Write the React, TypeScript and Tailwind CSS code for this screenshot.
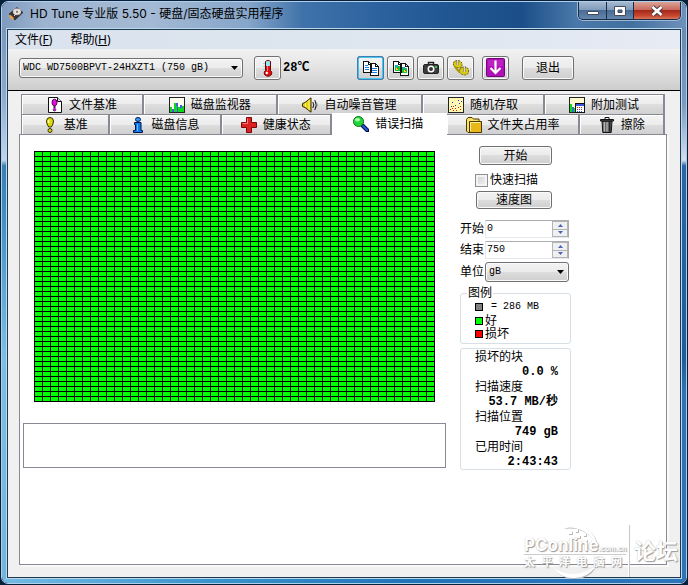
import React, { useState } from 'react';

const CJK = "font-['Liberation_Sans','Noto_Sans_CJK_SC',sans-serif]";
const MONO = "font-['Liberation_Mono','Noto_Sans_CJK_SC',monospace]";
const BUTTON =
  'rounded-[3px] border border-[#707070] bg-[linear-gradient(#f3f3f3,#ebebeb_50%,#dddddd_50%,#cfcfcf)] shadow-[inset_0_0_0_1px_#fafafa]';

type IconProps = { className?: string };

const AppIcon: React.FC = () => (
  <svg className="h-4 w-4" viewBox="0 0 16 16">
    <path d="M1 8 9 1.500l6 5L7 14z" fill="#3a3434" stroke="#1c1a1a" strokeWidth=".6" />
    <ellipse cx="9" cy="5.800" rx="4" ry="3.200" fill="#e8e2dc" stroke="#a99" strokeWidth=".4" />
    <circle cx="9" cy="5.800" r="1.100" fill="#7a6a60" />
    <path d="m2 8.500 4 3.500-1.500 2L1 10.500z" fill="#f0a040" />
    <path d="m6 10 3-3" stroke="#ddd" />
  </svg>
);

const ThermometerIcon: React.FC = () => (
  <svg className="h-[18px] w-4 shrink-0" viewBox="0 0 16 18">
    <path d="M5.500 2.500Q8 0 10.500 2.500V11.500q2 1.500 1 4-3.500 3.500-7 0-1-2.500 1-4z" fill="#e01010" stroke="#700000" />
    <path d="M6 2.500q2-1.500 4 0V7H6z" fill="#8fe8ee" />
    <path d="M7.500 7v5" stroke="#ff8080" />
    <circle cx="6.800" cy="14" r="1.200" fill="#fff" />
    <path d="M3 4.500h2M3 7.500h2M3 10.500h2" stroke="#8adfe4" />
  </svg>
);

const CopyTextIcon: React.FC = () => (
  <svg className="h-4 w-4" viewBox="0 0 16 16" shapeRendering="crispEdges">
    <path d="M.5 1.500h5l3 3v8h-8zM7.500 3.500h5l3 3v9h-8z" fill="#fff" stroke="#111" />
    <path d="M5.500 1.500v3h2M12.500 3.500v3h3" fill="none" stroke="#111" />
    <path d="M2 5.500h3M2 7.500h4M2 9.500h4M9 8.500h5M9 10.500h5M9 12.500h5" stroke="#1d7be8" />
  </svg>
);

const CopyImageIcon: React.FC = () => (
  <svg className="h-4 w-4" viewBox="0 0 16 16" shapeRendering="crispEdges">
    <path d="M.5 1.500h5l3 3v8h-8zM7.500 3.500h5l3 3v9h-8z" fill="#fff" stroke="#111" />
    <path d="M5.500 1.500v3h2M12.500 3.500v3h3" fill="none" stroke="#111" />
    <path d="M2 6h5v5H2zM9 8h5v5H9z" fill="#18c838" />
    <path d="M2 5h3v2H2zM9 7h3v2H9z" fill="#18a8b8" />
    <path d="M3 8h2v2H3zM11 10h2v2h-2z" fill="#f0e020" />
    <path d="M4 8h1v1H4zM12 10h1v1h-1z" fill="#e03010" />
  </svg>
);

const CameraIcon: React.FC = () => (
  <svg className="h-4 w-4" viewBox="0 0 16 16">
    <path d="M5.500 5V2.500h5V5" fill="none" stroke="#222" strokeWidth="1.500" />
    <rect x=".5" y="4.500" width="15" height="9" rx="1.500" fill="#3c3c3c" stroke="#222" />
    <circle cx="8" cy="9" r="3.500" fill="#fff" />
    <circle cx="8" cy="9" r="2" fill="#333" />
    <path d="M12 6h2v2h-2z" fill="#20d040" />
  </svg>
);

const GearsIcon: React.FC = () => (
  <svg className="h-4 w-4" viewBox="0 0 16 16">
    <path d="m.5 3 1-2L4 .5 7 1l2 2v3L7 8 3 7.500.5 6z" fill="#d8c818" stroke="#7a6c00" strokeDasharray="2 1" />
    <path d="m6.500 10 1.500-2.500L11 7l3 .5 1.500 2V13L13 15l-4-.5-2.500-2z" fill="#d8c818" stroke="#7a6c00" strokeDasharray="2 1" />
    <path d="m2 7 4.500 5" stroke="#a89800" strokeWidth="2" />
    <path d="M4.500 0v5M11.500 6v6" stroke="#777" strokeWidth="2" />
    <path d="M4.500 0v5M11.500 6v6" stroke="#eee" strokeWidth=".8" />
  </svg>
);

const DownloadIcon: React.FC = () => (
  <svg className="h-[19px] w-[19px]" viewBox="0 0 19 19">
    <rect x=".5" y=".5" width="18" height="18" rx="1" fill="#b010b8" stroke="#700878" />
    <path d="M2 2h15v6H2z" fill="#c838cc" opacity=".5" />
    <path d="M9.500 2.500v12M4.500 10l5 5 5-5" fill="none" stroke="#fff" strokeWidth="2.200" />
  </svg>
);

const FileBenchmarkIcon: React.FC<IconProps> = ({ className }) => (
  <svg className={className} viewBox="0 0 16 16">
    <path d="M1.500.5h9l4 4v11h-13z" fill="#fff" stroke="#111" />
    <path d="M10.500.5v4h4" fill="#ddd" stroke="#111" />
    <ellipse cx="7.500" cy="5.500" rx="2.500" ry="3.300" fill="#e010e0" stroke="#600060" />
    <path d="M7.500 8.500v2.500" stroke="#600060" strokeWidth="2" />
    <circle cx="7.500" cy="12.700" r="1.300" fill="#e010e0" stroke="#600060" strokeWidth=".8" />
  </svg>
);

const MonitorIcon: React.FC<IconProps> = ({ className }) => (
  <svg className={className} viewBox="0 0 16 16" shapeRendering="crispEdges">
    <path d="M.5.5h15v15H.500z" fill="#fffff0" stroke="#222" />
    <path d="M1 10h2v5H1zM5 6h2v9H5zM9 10h2v5H9zM13 9h2v6h-2z" fill="#10d820" />
    <path d="M3 12h2v3H3zM7 6h2v9H7zM11 8h2v7h-2z" fill="#4858e0" />
    <path d="M5 9h3v6H5zM11 11h2v4h-2z" fill="#10d820" />
  </svg>
);

const SpeakerIcon: React.FC<IconProps> = ({ className }) => (
  <svg className={className} viewBox="0 0 16 16">
    <path d="M.5 6.500 3 5.500 9 .8v14.400L3 10.500l-2.500-1z" fill="#e8d010" stroke="#302800" />
    <path d="M3.500 6v4M7 3v10" stroke="#fff890" />
    <path d="M10.800 5q2 3 0 6M12.800 3q3 5 0 10" fill="none" stroke="#111" />
    <path d="M14.500 5.500q1 2.500 0 5" fill="none" stroke="#777" />
  </svg>
);

const RandomIcon: React.FC<IconProps> = ({ className }) => (
  <svg className={className} viewBox="0 0 16 16" shapeRendering="crispEdges">
    <path d="M.5.5h15v15H.500z" fill="#fff6b0" stroke="#222" />
    <path d="M4 5h1v1H4zM10 3h1v1h-1zM13 4h1v1h-1zM7 8h1v1H7zM11 6h1v1h-1zM3 9h1v1H3z" fill="#2030e0" />
    <path d="M2 12h1v1H2zM4 11h1v1H4zM5 13h1v1H5zM7 11h1v1H7zM8 13h1v1H8zM10 10h1v1h-1zM12 9h1v1h-1zM12 12h1v1h-1zM5 9h1v1H5z" fill="#e02010" />
  </svg>
);

const ExtraTestIcon: React.FC<IconProps> = ({ className }) => (
  <svg className={className} viewBox="0 0 16 16" shapeRendering="crispEdges">
    <path d="M.5.5h15v15H.500z" fill="#fff9d0" stroke="#222" />
    <path d="M1 7h2v8H1zM3 11h3v4H3z" fill="#10d820" />
    <path d="M3 10h2v5H3z" fill="#2878c0" />
    <path d="M6.500 6.500h9v9h-9z" fill="#fff" stroke="#111" />
    <path d="M7 7h8v2H7z" fill="#3858e0" />
    <path d="M8 10h1v1H8zM10 10h1v1h-1zM12 10h1v1h-1zM8 12h1v1H8zM12 12h1v1h-1z" fill="#e02020" />
    <path d="M10 12h1v1h-1zM8 14h1v1H8zM10 14h1v1h-1zM12 14h1v1h-1z" fill="#3858e0" />
  </svg>
);

const BenchmarkIcon: React.FC<IconProps> = ({ className }) => (
  <svg className={className} viewBox="0 0 16 16">
    <path d="M4.500 4q.3-3.500 3.500-3.500T11.500 4q0 3-2.200 6H6.700Q4.500 7 4.500 4z" fill="#e0d810" stroke="#333000" />
    <path d="M6.500 3v3" stroke="#ffffb0" strokeWidth="1.500" />
    <circle cx="8" cy="13.500" r="2" fill="#d8d010" stroke="#333000" />
  </svg>
);

const InfoIcon: React.FC<IconProps> = ({ className }) => (
  <svg className={className} viewBox="0 0 16 16">
    <ellipse cx="8" cy="2.500" rx="2.500" ry="2" fill="#30a0ff" stroke="#001848" />
    <path d="M4.500 5.500h6.500v8h1.500v2h-9v-2H5.500v-6h-1z" fill="#1078f0" stroke="#001848" />
    <path d="M7.500 7v7" stroke="#60c0ff" />
  </svg>
);

const HealthIcon: React.FC<IconProps> = ({ className }) => (
  <svg className={className} viewBox="0 0 16 16">
    <path d="M5.500.5h5v5h5v5h-5v5h-5v-5h-5v-5h5z" fill="#e02020" stroke="#780808" />
    <path d="M6.500 1.500v5h-5" fill="none" stroke="#ff8078" />
  </svg>
);

const ScanIcon: React.FC<IconProps> = ({ className }) => (
  <svg className={className} viewBox="0 0 16 16">
    <path d="m9.500 9.500 5 5" stroke="#001040" strokeWidth="4" strokeLinecap="round" />
    <path d="m10 10 4 4" stroke="#2060e0" strokeWidth="2" strokeLinecap="round" />
    <circle cx="5.500" cy="5.500" r="5" fill="#20d838" stroke="#107018" />
    <ellipse cx="4.500" cy="3.800" rx="2.500" ry="1.800" fill="#b0ffb0" />
  </svg>
);

const FolderIcon: React.FC<IconProps> = ({ className }) => (
  <svg className={className} viewBox="0 0 16 16">
    <path d="M.5 2.500 2 .5h4L7.500 2H13v12l-2 1.500H2L.500 14z" fill="#f8e060" stroke="#4a3800" />
    <path d="M3.500 4.500h12v11h-12z" fill="#e8b818" stroke="#4a3800" />
    <path d="M4.500 14V5.500H14" fill="none" stroke="#fff0a0" />
  </svg>
);

const TrashIcon: React.FC<IconProps> = ({ className }) => (
  <svg className={className} viewBox="0 0 16 16">
    <path d="M3 4h10l-.8 11.500H3.800z" fill="#666" stroke="#111" />
    <path d="M5.300 5v9.500M8 5v9.500" stroke="#c8c8c8" />
    <path d="M10.700 5v9.500" stroke="#222" strokeWidth="1.500" />
    <path d="M1.500 2.500h13v1.500h-13z" fill="#555" stroke="#111" />
    <path d="M6 2V.5h4V2" fill="none" stroke="#111" />
  </svg>
);

interface TabItem {
  label: string;
  icon: React.FC<IconProps>;
  size: string;
}

const upperTabs: TabItem[] = [
  { label: '文件基准', icon: FileBenchmarkIcon, size: 'flex-[122_1_0px]' },
  { label: '磁盘监视器', icon: MonitorIcon, size: 'flex-[134_1_0px]' },
  { label: '自动噪音管理', icon: SpeakerIcon, size: 'flex-[146_1_0px]' },
  { label: '随机存取', icon: RandomIcon, size: 'flex-[122_1_0px]' },
  { label: '附加测试', icon: ExtraTestIcon, size: 'flex-[120_1_0px]' },
];

const lowerTabs: TabItem[] = [
  { label: '基准', icon: BenchmarkIcon, size: 'flex-[87_1_0px]' },
  { label: '磁盘信息', icon: InfoIcon, size: 'flex-[112_1_0px]' },
  { label: '健康状态', icon: HealthIcon, size: 'flex-[110_1_0px]' },
  { label: '错误扫描', icon: ScanIcon, size: 'flex-[115_1_0px]' },
  { label: '文件夹占用率', icon: FolderIcon, size: 'flex-[134_1_0px]' },
  { label: '擦除', icon: TrashIcon, size: 'flex-[84_1_0px]' },
];

const tools = [
  { label: '复制文本', icon: CopyTextIcon, focused: true },
  { label: '复制图像', icon: CopyImageIcon },
  { label: '保存截图', icon: CameraIcon },
  { label: '选项', icon: GearsIcon },
];

const stats = [
  { label: '损坏的块', value: '0.0 %' },
  { label: '扫描速度', value: '53.7 MB/秒' },
  { label: '扫描位置', value: '749 gB' },
  { label: '已用时间', value: '2:43:43' },
];

const Tab: React.FC<{ item: TabItem; active: boolean; onSelect: () => void }> = ({ item, active, onSelect }) => {
  const Icon = item.icon;
  return (
    <button
      role="tab"
      aria-selected={active}
      onClick={onSelect}
      className={`flex min-w-0 items-center justify-center gap-[6px] border-r-2 whitespace-nowrap text-xs ${item.size} ${
        active
          ? 'relative z-10 -mt-px -mb-px border-white bg-white pb-px'
          : 'border-t border-[#898994] bg-[linear-gradient(#f4f4f4,#ececec_50%,#dedede_50%,#d0d0d0)] shadow-[inset_1px_1px_0_#fff]'
      }`}
    >
      <Icon className="h-4 w-4 shrink-0" />
      <span>{item.label}</span>
    </button>
  );
};

const SelectArrow: React.FC = () => (
  <svg className="pointer-events-none absolute top-1/2 right-[5px] h-1 w-[7px] -translate-y-1/2" viewBox="0 0 7 4">
    <path d="M0 0h7L3.500 4z" fill="#000" />
  </svg>
);

const SpinField: React.FC<{ id: string; label: string; initial: number }> = ({ id, label, initial }) => {
  const [value, setValue] = useState(initial);
  return (
    <div className="flex h-[18px] items-center gap-px">
      <label htmlFor={id} className="w-6 shrink-0 whitespace-nowrap">
        {label}
      </label>
      <div className="flex h-full w-[84px] border border-[#e3e9ef] border-t-[#abadb3] border-r-[#abadb3] bg-white">
        <input
          id={id}
          value={value}
          onChange={(e) => setValue(Number(e.target.value) || 0)}
          className={`min-w-0 flex-1 pl-px text-[10px] outline-none ${MONO}`}
        />
        <div className="flex w-4 flex-col border border-[#b4b4b8] bg-[#b4b4b8]">
          <button aria-label={`${label} +`} onClick={() => setValue(value + 1)} className="flex flex-1 items-center justify-center bg-[#f0f0f0]">
            <svg className="h-[3px] w-[5px]" viewBox="0 0 5 3">
              <path d="M0 3h5L2.500 0z" fill="#4a64b8" />
            </svg>
          </button>
          <button aria-label={`${label} -`} onClick={() => setValue(value - 1)} className="mt-px flex flex-1 items-center justify-center bg-[#f0f0f0]">
            <svg className="h-[3px] w-[5px]" viewBox="0 0 5 3">
              <path d="M0 0h5L2.500 3z" fill="#4a64b8" />
            </svg>
          </button>
        </div>
      </div>
    </div>
  );
};

const TitleBar: React.FC = () => (
  <header className="flex h-[26px] items-start bg-[linear-gradient(90deg,#7f9bc0,#9db3cf_6%,#a3b9d4_22%,#86a5c9_36%,#3f72a9_44%,#2c639f_55%,#1f5590_66%,#1c4f89_76%,#4a78aa_84%,#41709f_92%,#6f91ba)]">
    <div className="flex h-6 min-w-0 flex-1 items-center gap-1 pl-[6px]">
      <AppIcon />
      <h1 className="truncate pl-[2px] font-['Inter','Noto_Sans_CJK_SC',sans-serif] text-xs leading-6 text-black">
        HD Tune 专业版 5.50 - 硬盘/固态硬盘实用程序
      </h1>
    </div>
    <div className="mr-[5px] flex h-[18px] overflow-hidden rounded-b-[5px] border border-t-0 border-[#1b2c45] shadow-[0_0_0_1px_#9db8d6]">
      <button aria-label="最小化" className="flex w-[28px] items-center justify-center border-r border-[#1b2c45] bg-[linear-gradient(#a5b9d0,#7e9abb_48%,#4a6b94_50%,#6587ad)]">
        <svg className="h-3 w-3" viewBox="0 0 12 12">
          <path d="M.5 6.500h11v3H.500z" fill="#fff" stroke="#444c5c" />
        </svg>
      </button>
      <button aria-label="最大化" className="flex w-[27px] items-center justify-center border-r border-[#1b2c45] bg-[linear-gradient(#a5b9d0,#7e9abb_48%,#4a6b94_50%,#6587ad)]">
        <svg className="h-3 w-3" viewBox="0 0 12 12">
          <path d="M.5 1.500h11v9H.500zM4 5v2.500h4V5z" fill="#fff" fillRule="evenodd" stroke="#444c5c" />
        </svg>
      </button>
      <button aria-label="关闭" className="flex w-[46px] items-center justify-center bg-[linear-gradient(#dba398,#c8675a_48%,#a52a1c_50%,#c5452f_80%,#d8765a)]">
        <svg className="h-3 w-3" viewBox="0 0 12 12">
          <path d="m1.500 2 9 8M10.500 2l-9 8" stroke="#4a3a40" strokeWidth="4.500" />
          <path d="m1.500 2 9 8M10.500 2l-9 8" stroke="#fff" strokeWidth="2.600" />
        </svg>
      </button>
    </div>
  </header>
);

const Toolbar: React.FC = () => (
  <div className="flex h-[42px] items-center border-b border-black bg-[linear-gradient(#f2f2f2,#e2e2e2_50%,#cdcdcd)] pr-2 pb-1 pl-[11px]">
    <div className="relative h-5 w-56 shrink-0">
      <select aria-label="驱动器" className={`block h-full w-full appearance-none pl-[3px] text-[10px] ${BUTTON} ${MONO}`}>
        <option>WDC WD7500BPVT-24HXZT1 (750 gB)</option>
      </select>
      <SelectArrow />
    </div>
    <button aria-label="温度" className={`ml-[11px] flex h-6 w-[27px] shrink-0 items-center justify-center ${BUTTON}`}>
      <ThermometerIcon />
    </button>
    <span className={`w-[76px] shrink-0 pl-[2px] text-xs font-bold ${MONO}`}>28℃</span>
    <div className="flex gap-[3px]">
      {tools.map(({ label, icon: Icon, focused }) => (
        <button
          key={label}
          aria-label={label}
          className={`flex h-6 w-[27px] items-center justify-center ${BUTTON} ${
            focused ? 'outline-1 -outline-offset-1 outline-[#3c7fb1] ring-1 ring-[#48c4f0] ring-inset' : ''
          }`}
        >
          <Icon />
        </button>
      ))}
    </div>
    <button aria-label="更新" className={`ml-2 flex h-6 w-[27px] shrink-0 items-center justify-center ${BUTTON}`}>
      <DownloadIcon />
    </button>
    <button className={`ml-[13px] h-6 w-[52px] shrink-0 text-xs ${BUTTON}`}>退出</button>
  </div>
);

const BlockMap: React.FC = () => (
  <svg className="ml-[11px] h-[251px] w-[401px]" viewBox="0 0 401 251" role="img" aria-label="磁盘块" shapeRendering="crispEdges">
    <defs>
      <pattern id="block" width="8" height="5" patternUnits="userSpaceOnUse">
        <path d="M0 0h8v5H0z" fill="#000" />
        <path d="M1 1h7v4H1z" fill="#00ff00" />
      </pattern>
    </defs>
    <rect width="401" height="251" fill="url(#block)" />
    <path d="M400.500 0v251M0 250.500h401" stroke="#000" />
  </svg>
);

const ScanControls: React.FC = () => {
  const [quick, setQuick] = useState(false);
  return (
    <div className="w-[111px] shrink-0 pt-[11px] text-xs leading-[14px]">
      <div className="flex flex-col items-start pl-[15px]">
        <button className={`ml-1 h-[19px] w-[73px] ${BUTTON}`}>开始</button>
        <label className="mt-2 flex h-[14px] items-center gap-[2px] whitespace-nowrap">
          <input
            type="checkbox"
            checked={quick}
            onChange={(e) => setQuick(e.target.checked)}
            className="h-[13px] w-[13px] appearance-none border border-[#8e8f8f] bg-[linear-gradient(135deg,#cbcfd5,#f6f6f6)] shadow-[inset_0_0_0_2px_#f4f4f4] checked:bg-[#4a64b8]"
          />
          快速扫描
        </label>
        <button className={`mt-1 ml-px h-[18px] w-[76px] ${BUTTON}`}>速度图</button>
      </div>

      <div className="mt-[11px] flex flex-col gap-[3px]">
        <SpinField id="scan-start" label="开始" initial={0} />
        <SpinField id="scan-end" label="结束" initial={750} />
        <div className="flex h-5 items-center gap-px">
          <label htmlFor="scan-unit" className="w-6 shrink-0">
            单位
          </label>
          <div className="relative h-full w-[84px]">
            <select id="scan-unit" className={`block h-full w-full appearance-none pl-[3px] text-[10px] ${BUTTON} ${MONO}`}>
              <option>gB</option>
            </select>
            <SelectArrow />
          </div>
        </div>
      </div>

      <fieldset className="mt-1 h-[58px] rounded-[3px] border border-[#d5dfe5] pl-[14px]">
        <legend className="-ml-2 h-[14px] px-px">图例</legend>
        <ul>
          <li className="flex h-[14px] items-center gap-2">
            <span className="h-2 w-2 border border-black bg-[#808080]" />
            <span className={`text-[10px] whitespace-nowrap ${MONO}`}>= 286 MB</span>
          </li>
          <li className="flex h-[13px] items-center gap-[2px]">
            <span className="h-2 w-2 border border-black bg-[#00ff00]" />好
          </li>
          <li className="flex h-[14px] items-center gap-[2px]">
            <span className="h-2 w-2 border border-black bg-[#ff0000]" />
            损坏
          </li>
        </ul>
      </fieldset>

      <dl className="mt-1 h-[122px] rounded-[3px] border border-[#d5dfe5] pr-3 pl-[14px]">
        {stats.map((stat) => (
          <div key={stat.label} className="h-[30px]">
            <dt className="h-4 leading-4">{stat.label}</dt>
            <dd className={`h-[14px] text-right font-bold whitespace-nowrap ${MONO}`}>{stat.value}</dd>
          </div>
        ))}
      </dl>
    </div>
  );
};

const Watermark: React.FC = () => (
  <div className="pointer-events-none absolute right-2.5 bottom-[3px] z-20 flex h-[62px] items-center text-white [text-shadow:1px_1px_1px_#999,0_0_1px_#bbb]">
    <div className="relative w-[102px]">
      <svg className="absolute -top-3 left-[26px] h-[56px] w-[56px] drop-shadow-[1px_1px_0_#bbb]" viewBox="0 0 56 56">
        <path d="M13 5Q24-1 36 5q11 7 12 22-5-14-13-18Q25 3 13 5zM3 44q7 11 19 11 15 1 23-11-10 7-23 7-11 0-19-7z" fill="#fff" />
        <path d="M18 8h4v3h-4zM25 6h3v3h-3zM26 12h4v3h-4zM33 10h3v3h-3zM32 16h5v3h-5zM21 14h3v2h-3z" fill="#fff" />
      </svg>
      <div className="relative flex items-end font-['Inter',sans-serif] whitespace-nowrap">
        <span className="text-[17px] leading-5 font-bold">PConline</span>
        <span className="text-[7px] leading-3 font-bold">.com.cn</span>
      </div>
      <div className="relative flex justify-between border-t border-white pr-1 text-[11px] leading-3 font-bold shadow-[0_-1px_0_#ccc]">
        {Array.from('太平洋电脑网').map((c) => (
          <span key={c}>{c}</span>
        ))}
      </div>
    </div>
    <div className="ml-[2px] h-[52px] w-[2px] border-r border-[#c8c8c8] bg-white" />
    <span className="ml-1 text-[22px] font-bold">论坛</span>
  </div>
);

const App: React.FC = () => {
  const [active, setActive] = useState('错误扫描');

  const renderTabs = (items: TabItem[]) =>
    items.map((item) => (
      <Tab key={item.label} item={item} active={item.label === active} onSelect={() => setActive(item.label)} />
    ));

  return (
    <div className={`relative flex min-h-screen flex-col bg-[#08203c] p-px text-black ${CJK}`}>
      <div className="flex flex-1 flex-col overflow-hidden rounded-[7px] border border-[#b0cfe8]">
        <TitleBar />
        <div className="flex flex-1">
          <div className="w-1 bg-[linear-gradient(#7d97ba,#8ea9cd_12%,#c4d4e8_24%,#3a7fb0_25%,#3b8cc0_32%,#7bbfe4_60%,#74b4dc)]" />
          <div className="flex min-w-0 flex-1 flex-col border border-[#b8d8ec]">
            <main className="flex flex-1 flex-col border border-[#1f3a50] bg-[#f0f0f0]">
              <nav className="flex h-[19px] items-center gap-[18px] bg-[linear-gradient(90deg,#dae3ee,#dde5ee_50%,#e6ebf4)] pl-[7px] font-['Noto_Sans','Noto_Sans_CJK_SC',sans-serif] text-xs leading-[19px]">
                <button>
                  文件(<u>F</u>)
                </button>
                <button>
                  帮助(<u>H</u>)
                </button>
              </nav>
              <Toolbar />

              <div role="tablist" className="mr-[15px] ml-[13px] pt-[3px]">
                <div className="flex h-5 border-l border-[#898994]">{renderTabs(upperTabs)}</div>
                <div className="flex h-5 border-l border-[#898994]">{renderTabs(lowerTabs)}</div>
              </div>

              <section className="mr-[13px] mb-3 ml-[11px] flex flex-1 gap-[14px] border border-[#898994] bg-white pl-[3px] shadow-[2px_2px_0_#fafafa]">
                <div className="flex w-[423px] flex-col pt-4">
                  <BlockMap />
                  <textarea
                    aria-label="扫描信息"
                    readOnly
                    className="mt-[21px] h-[45px] w-full resize-none border border-[#898994] bg-white outline-none"
                  />
                </div>
                <ScanControls />
              </section>
            </main>
          </div>
          <div className="w-1 bg-[linear-gradient(#6a8ab2,#7f9ac0_14%,#d4dff0_24%,#2d66a6_25%,#1f5c9c_60%,#2f72b6_66%,#2f74b8)]" />
        </div>
        <div className="h-1 bg-[linear-gradient(90deg,#74bbe4,#3a94cc_30%,#2173b8_60%,#2f74b8)]" />
      </div>
      <Watermark />
    </div>
  );
};

export default App;
